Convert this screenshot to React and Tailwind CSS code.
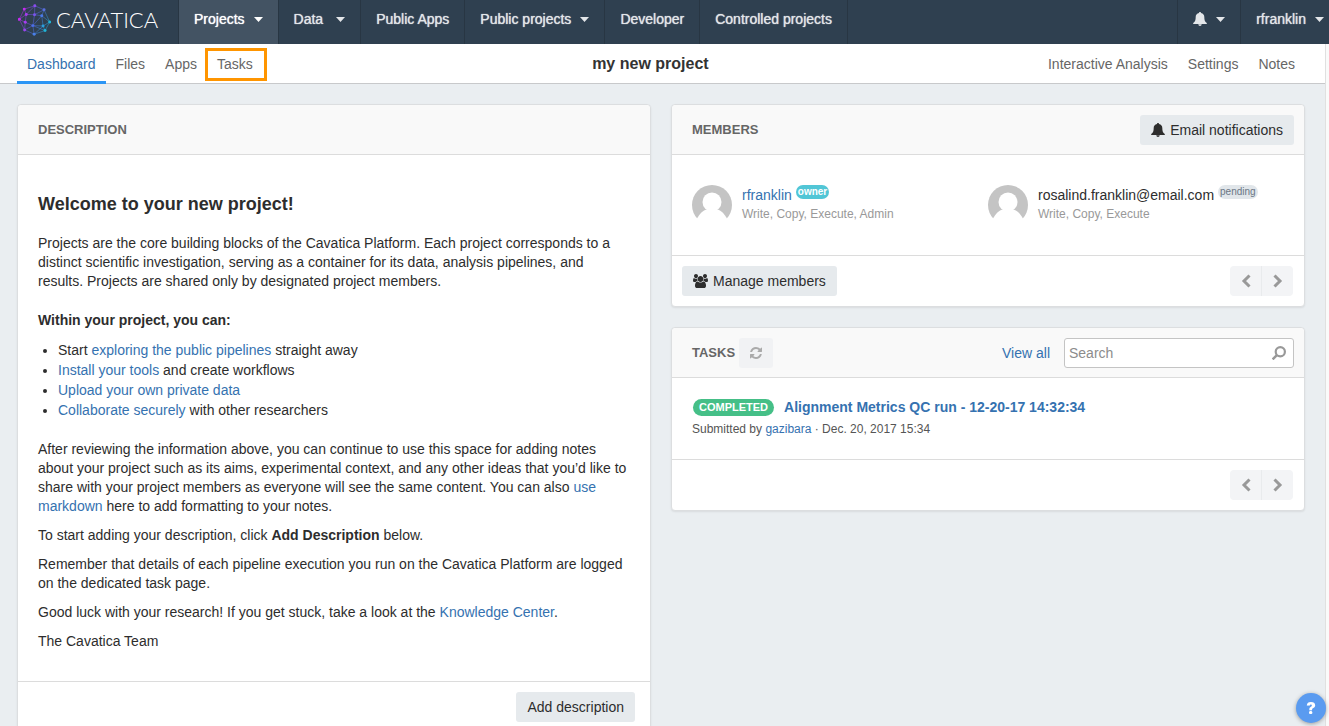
import clsx from 'clsx';

const leftTabs = ['Files', 'Apps', 'Tasks'];
const rightTabs = ['Interactive Analysis', 'Settings', 'Notes'];

const logoNodes = [
    [105, 15, '#8a4df0'], [133, 27, '#5a6fe0'], [150, 64, '#1fb5d8'], [136, 90, '#1fb5d8'],
    [103, 101, '#4a80e8'], [74, 88, '#9a45ee'], [58, 56, '#c32cf0'], [73, 25, '#c32cf0'],
    [104, 42, '#7a55ec'], [126, 45, '#4a7ae8'], [130, 76, '#2aa0dc'], [99, 75, '#4a70ec'],
    [79, 41, '#a83cf0'], [76, 65, '#a83cf0'],
];

const logoEdges = [
    [0, 1], [1, 2], [2, 3], [3, 4], [4, 5], [5, 6], [6, 7], [7, 0], [0, 8], [0, 12], [1, 8], [1, 9],
    [2, 9], [2, 10], [3, 10], [3, 11], [4, 11], [4, 10], [5, 11], [5, 13], [6, 13], [6, 12], [7, 12],
    [8, 12], [8, 9], [8, 11], [9, 11], [9, 10], [10, 11], [12, 13], [11, 13],
];

function LogoMark() {
    return (
        <svg viewBox="54 10 100 96" className="h-8 w-[33px]" aria-hidden="true">
            <defs>
                <linearGradient id="mark" gradientUnits="userSpaceOnUse" x1="58" y1="40" x2="150" y2="80">
                    <stop offset="0" stopColor="#c32cf0" />
                    <stop offset="0.5" stopColor="#5a66e8" />
                    <stop offset="1" stopColor="#1fb5d8" />
                </linearGradient>
            </defs>
            {logoEdges.map(([a, b]) => (
                <path
                    key={`${a}-${b}`}
                    d={`M${logoNodes[a][0]} ${logoNodes[a][1]}L${logoNodes[b][0]} ${logoNodes[b][1]}`}
                    stroke="url(#mark)"
                    strokeWidth="2"
                    opacity="0.75"
                />
            ))}
            {logoNodes.map(([x, y, fill]) => (
                <circle key={`${x}-${y}`} cx={x} cy={y} r="4.5" fill={fill} />
            ))}
        </svg>
    );
}

function Caret() {
    return (
        <svg viewBox="0 0 9 5" className="h-[5px] w-[9px] shrink-0" aria-hidden="true">
            <path d="M0 0h9L4.5 5z" fill="currentColor" />
        </svg>
    );
}

function Bell() {
    return (
        <svg viewBox="0 0 14 14" className="size-3.5 shrink-0" aria-hidden="true">
            <path
                d="M7 0c.7 0 1 .4 1 1 2.200.5 3.300 2 3.300 4 0 3 .6 4.800 2.500 6v1H.2v-1C2.100 9.800 2.700 8 2.700 5c0-2 1.100-3.500 3.300-4 0-.6.300-1 1-1zM5.300 12.300h3.400C8.600 13.400 8 14 7 14s-1.600-.6-1.700-1.700z"
                fill="currentColor"
            />
        </svg>
    );
}

function UsersIcon() {
    return (
        <svg viewBox="0 0 1920 1792" className="h-3.5 w-[15px] shrink-0" aria-hidden="true">
            <path
                d="M593 896q-162 5-265 128h-134q-82 0-138-40.5t-56-118.5q0-353 124-353 6 0 43.5 21t97.5 42.5 119 21.5q67 0 133-23-5 37-5 66 0 139 81 256zm1071 637q0 120-73 189.5t-194 69.5h-874q-121 0-194-69.5t-73-189.5q0-53 3.5-103.5t14-109 26.5-108.5 43-97.5 62-81 85.5-53.5 111.5-20q10 0 43 21.5t73 48 107 48 135 21.5 135-21.5 107-48 73-48 43-21.5q61 0 111.5 20t85.5 53.5 62 81 43 97.5 26.5 108.5 14 109 3.5 103.5zm-1024-1277q0 106-75 181t-181 75-181-75-75-181 75-181 181-75 181 75 75 181zm704 384q0 159-112.5 271.5t-271.5 112.5-271.5-112.5-112.5-271.5 112.5-271.5 271.5-112.5 271.5 112.5 112.5 271.5zm576 225q0 78-56 118.5t-138 40.5h-134q-103-123-265-128 81-117 81-256 0-29-5-66 66 23 133 23 59 0 119-21.5t97.5-42.5 43.5-21q124 0 124 353zm-128-609q0 106-75 181t-181 75-181-75-75-181 75-181 181-75 181 75 75 181z"
                fill="currentColor"
            />
        </svg>
    );
}

function RefreshIcon() {
    return (
        <svg viewBox="0 0 1536 1792" className="h-3.5 w-3" aria-hidden="true">
            <path
                d="M1511 1056q0 5-1 7-64 268-268 434.5t-478 166.5q-146 0-282.5-55t-243.5-157l-129 129q-19 19-45 19t-45-19-19-45v-448q0-26 19-45t45-19h448q26 0 45 19t19 45-19 45l-137 137q71 66 161 102t187 36q134 0 250-65t186-179q11-17 53-117 8-23 30-23h192q13 0 22.5 9.5t9.5 22.5zm25-800v448q0 26-19 45t-45 19h-448q-26 0-45-19t-19-45 19-45l138-138q-148-137-349-137-134 0-250 65t-186 179q-11 17-53 117-8 23-30 23h-199q-13 0-22.5-9.5t-9.5-22.5v-7q65-268 270-434.5t480-166.5q146 0 284 55.5t245 156.5l130-129q19-19 45-19t45 19 19 45z"
                fill="currentColor"
            />
        </svg>
    );
}

function SearchIcon() {
    return (
        <svg viewBox="0 0 14 14" className="size-3.5" fill="none" stroke="currentColor" aria-hidden="true">
            <circle cx="8.300" cy="5.700" r="4.600" strokeWidth="2.200" />
            <path d="M4.900 9.100L.6 13.400" strokeWidth="2.500" />
        </svg>
    );
}

function Chevron({ d }) {
    return (
        <svg viewBox="0 0 10 14" className="h-3.5 w-2.5" fill="none" stroke="currentColor" strokeWidth="3" aria-hidden="true">
            <path d={d} />
        </svg>
    );
}

function Avatar() {
    return (
        <svg viewBox="0 0 40 40" className="size-10 shrink-0" aria-hidden="true">
            <circle cx="20" cy="20" r="20" fill="#c4c4c4" />
            <circle cx="20" cy="17" r="9.500" fill="#fff" />
            <path d="M4.500 34.500C7.500 29 10.500 25.500 14.500 24.500h11c4 1 7 4.500 10 10V40h-31z" fill="#fff" />
        </svg>
    );
}

function NavItem({ label, caret, active, wide }) {
    return (
        <button
            className={clsx(
                'flex h-11 items-center border-r border-[#283643] px-[15px] pb-1.5 whitespace-nowrap',
                wide ? 'gap-[13px]' : 'gap-[9px]',
                active ? 'bg-[#435363] text-white' : 'text-[#e3e6e9]',
            )}
        >
            <span className="[text-shadow:0_0_1px_currentColor]">{label}</span>
            {caret && <Caret />}
        </button>
    );
}

function Card({ children }) {
    return (
        <section className="rounded border border-[#dcdee0] bg-white shadow-[0_1px_2px_rgba(0,0,0,0.08)]">
            {children}
        </section>
    );
}

function CardHeader({ title, children }) {
    return (
        <header className="flex h-[50px] items-center rounded-t border-b border-[#dcdcdc] bg-[#f9f9f9] pr-2.5 pl-5">
            <h2 className="pt-0.5 text-[13px] font-bold text-[#666]">{title}</h2>
            {children}
        </header>
    );
}

function Pager() {
    return (
        <div className="mr-px ml-auto flex text-[#999]">
            <button aria-label="Previous page" className="flex h-[30px] w-8 items-center justify-center rounded-l border-r border-[#e9ebed] bg-[#f3f4f6]">
                <Chevron d="M8.500 1.500L3 7l5.500 5.500" />
            </button>
            <button aria-label="Next page" className="flex h-[30px] w-[31px] items-center justify-center rounded-r bg-[#f3f4f6]">
                <Chevron d="M1.500 1.500L7 7l-5.500 5.500" />
            </button>
        </div>
    );
}

function Button({ children }) {
    return (
        <button className="flex h-[30px] items-center gap-[5px] rounded-[3px] bg-[#e6eaed] px-[11px] text-[#2d2d2d]">
            {children}
        </button>
    );
}

function Link({ children }) {
    return <a href="#" className="text-[#3572b0]">{children}</a>;
}

function Member({ name, role, permissions, owner }) {
    return (
        <div className="flex flex-1 gap-2.5">
            <Avatar />
            <div>
                <div className="flex h-5 gap-1 leading-5">
                    {owner ? <Link>{name}</Link> : <span>{name}</span>}
                    <span
                        className={clsx(
                            'h-3.5 rounded-full px-0.5 text-[10px] leading-[14px]',
                            owner ? 'bg-[#51c6d6] font-bold text-white' : 'bg-[#e1e6ea] text-[#6b7785]',
                        )}
                    >
                        {role}
                    </span>
                </div>
                <div className="text-xs leading-[18px] text-[#999]">{permissions}</div>
            </div>
        </div>
    );
}

function TopBar() {
    return (
        <header className="flex h-11 items-stretch bg-[#2f4050]">
            <a href="#" className="flex w-[179px] items-center border-r border-[#283643] pb-1 pl-[18px] text-white">
                <LogoMark />
                <span className="ml-[5px] font-[Lato] text-[22px] font-light">CAVATICA</span>
            </a>
            <nav className="flex">
                <NavItem label="Projects" caret active />
                <NavItem label="Data" caret wide />
                <NavItem label="Public Apps" />
                <NavItem label="Public projects" caret />
                <NavItem label="Developer" />
                <NavItem label="Controlled projects" />
            </nav>
            <div className="ml-auto flex text-[#e3e6e9]">
                <button aria-label="Notifications" className="flex items-center gap-[9px] border-l border-[#283643] px-[15px] pb-1.5">
                    <Bell />
                    <Caret />
                </button>
                <button className="flex items-center gap-[9px] border-l border-[#283643] pr-[5px] pb-1.5 pl-[15px]">
                    <span className="[text-shadow:0_0_1px_currentColor]">rfranklin</span>
                    <Caret />
                </button>
            </div>
        </header>
    );
}

function ProjectNav() {
    return (
        <nav className="flex h-10 border-b border-[#c8c9cb] bg-white pr-2.5 pl-[17px] text-[#666]">
            <a href="#" className="-mb-px border-b-[3px] border-[#2b95f5] px-2.5 leading-10 text-[#3572b0]">Dashboard</a>
            {leftTabs.map((tab) => (
                <a key={tab} href="#" className="relative px-2.5 leading-10">
                    {tab}
                    {tab === 'Tasks' && <span className="absolute top-1 -right-1 -left-0.5 h-[33px] border-3 border-[#ff9500]" />}
                </a>
            ))}
            <h1 className="flex-1 text-center text-base leading-10 font-bold text-[#333]">my new project</h1>
            {rightTabs.map((tab) => (
                <a key={tab} href="#" className="px-2.5 leading-10">{tab}</a>
            ))}
            <span className="w-2.5" />
        </nav>
    );
}

function Description() {
    return (
        <Card>
            <CardHeader title="DESCRIPTION" />
            <div className="border-b border-[#dcdcdc] px-5 pt-9 pb-[30px] leading-[19px]">
                <h3 className="mb-[17px] text-lg leading-[26px] font-bold">Welcome to your new project!</h3>
                <p>
                    Projects are the core building blocks of the Cavatica Platform. Each project corresponds to a
                    distinct scientific investigation, serving as a container for its data, analysis pipelines, and
                    results. Projects are shared only by designated project members.
                </p>
                <h4 className="mt-5 font-bold">Within your project, you can:</h4>
                <ul className="mt-2.5 mb-5 list-disc pl-5 leading-5">
                    <li>Start <Link>exploring the public pipelines</Link> straight away</li>
                    <li><Link>Install your tools</Link> and create workflows</li>
                    <li><Link>Upload your own private data</Link></li>
                    <li><Link>Collaborate securely</Link> with other researchers</li>
                </ul>
                <div className="space-y-2.5">
                    <p>
                        After reviewing the information above, you can continue to use this space for adding notes
                        about your project such as its aims, experimental context, and any other ideas that you’d like to
                        share with your project members as everyone will see the same content. You can also <Link>use
                        markdown</Link> here to add formatting to your notes.
                    </p>
                    <p>To start adding your description, click <b>Add Description</b> below.</p>
                    <p>
                        Remember that details of each pipeline execution you run on the Cavatica Platform are logged
                        on the dedicated task page.
                    </p>
                    <p>Good luck with your research! If you get stuck, take a look at the <Link>Knowledge Center</Link>.</p>
                    <p>The Cavatica Team</p>
                </div>
            </div>
            <div className="flex justify-end py-2.5 pr-[15px]">
                <Button>Add description</Button>
            </div>
        </Card>
    );
}

function Members() {
    return (
        <Card>
            <CardHeader title="MEMBERS">
                <div className="ml-auto">
                    <Button><Bell />Email notifications</Button>
                </div>
            </CardHeader>
            <div className="flex border-b border-[#dcdcdc] px-5 py-[30px]">
                <Member name="rfranklin" role="owner" permissions="Write, Copy, Execute, Admin" owner />
                <Member name="rosalind.franklin@email.com" role="pending" permissions="Write, Copy, Execute" />
            </div>
            <div className="flex p-2.5">
                <Button><UsersIcon />Manage members</Button>
                <Pager />
            </div>
        </Card>
    );
}

function Tasks() {
    return (
        <Card>
            <CardHeader title="TASKS">
                <button aria-label="Refresh" className="ml-1 flex h-[30px] w-[34px] items-center justify-center rounded-[3px] bg-[#f1f2f4] text-[#aaa]">
                    <RefreshIcon />
                </button>
                <div className="mr-3.5 ml-auto"><Link>View all</Link></div>
                <div className="relative w-[230px]">
                    <input
                        type="text"
                        aria-label="Search tasks"
                        placeholder="Search"
                        className="h-[30px] w-full rounded-[3px] border border-[#c4c4c4] bg-white pr-8 pl-1 placeholder:text-[#8c8c8c]"
                    />
                    <span className="absolute top-2 right-2 text-[#999]"><SearchIcon /></span>
                </div>
            </CardHeader>
            <div className="border-b border-[#dcdcdc] px-5 pt-[19px] pb-5">
                <div className="mb-0.5 flex items-center gap-2.5 leading-5">
                    <span className="ml-px rounded-full bg-[#45bf87] px-1.5 text-[11px] leading-[17px] font-bold text-white">COMPLETED</span>
                    <a href="#" className="font-bold text-[#3572b0]">Alignment Metrics QC run - 12-20-17 14:32:34</a>
                </div>
                <p className="text-xs leading-5 text-[#555]">Submitted by <Link>gazibara</Link> · Dec. 20, 2017 15:34</p>
            </div>
            <div className="flex p-2.5">
                <Pager />
            </div>
        </Card>
    );
}

export default function App() {
    return (
        <div className="flex h-screen flex-col overflow-hidden bg-[#eaeef1] font-['Liberation_Sans',Arial,sans-serif] text-sm text-[#2d2d2d]">
            <TopBar />
            <div className="flex min-h-0 flex-1">
                <div className="min-w-0 flex-1">
                    <ProjectNav />
                    <main className="grid grid-cols-2 items-start gap-5 pt-5 pr-5 pl-[17px]">
                        <Description />
                        <div className="space-y-5">
                            <Members />
                            <Tasks />
                        </div>
                    </main>
                </div>
                <div className="w-1 border-l border-[#e0e0e0] bg-[#fafafa]" />
            </div>
            <button
                aria-label="Help"
                className="fixed right-[3px] bottom-[3px] size-[30px] rounded-full bg-[#5a9bf0] font-[Inter] text-base font-black text-white shadow-[0_1px_4px_rgba(0,0,0,0.35)]"
            >
                ?
            </button>
        </div>
    );
}
